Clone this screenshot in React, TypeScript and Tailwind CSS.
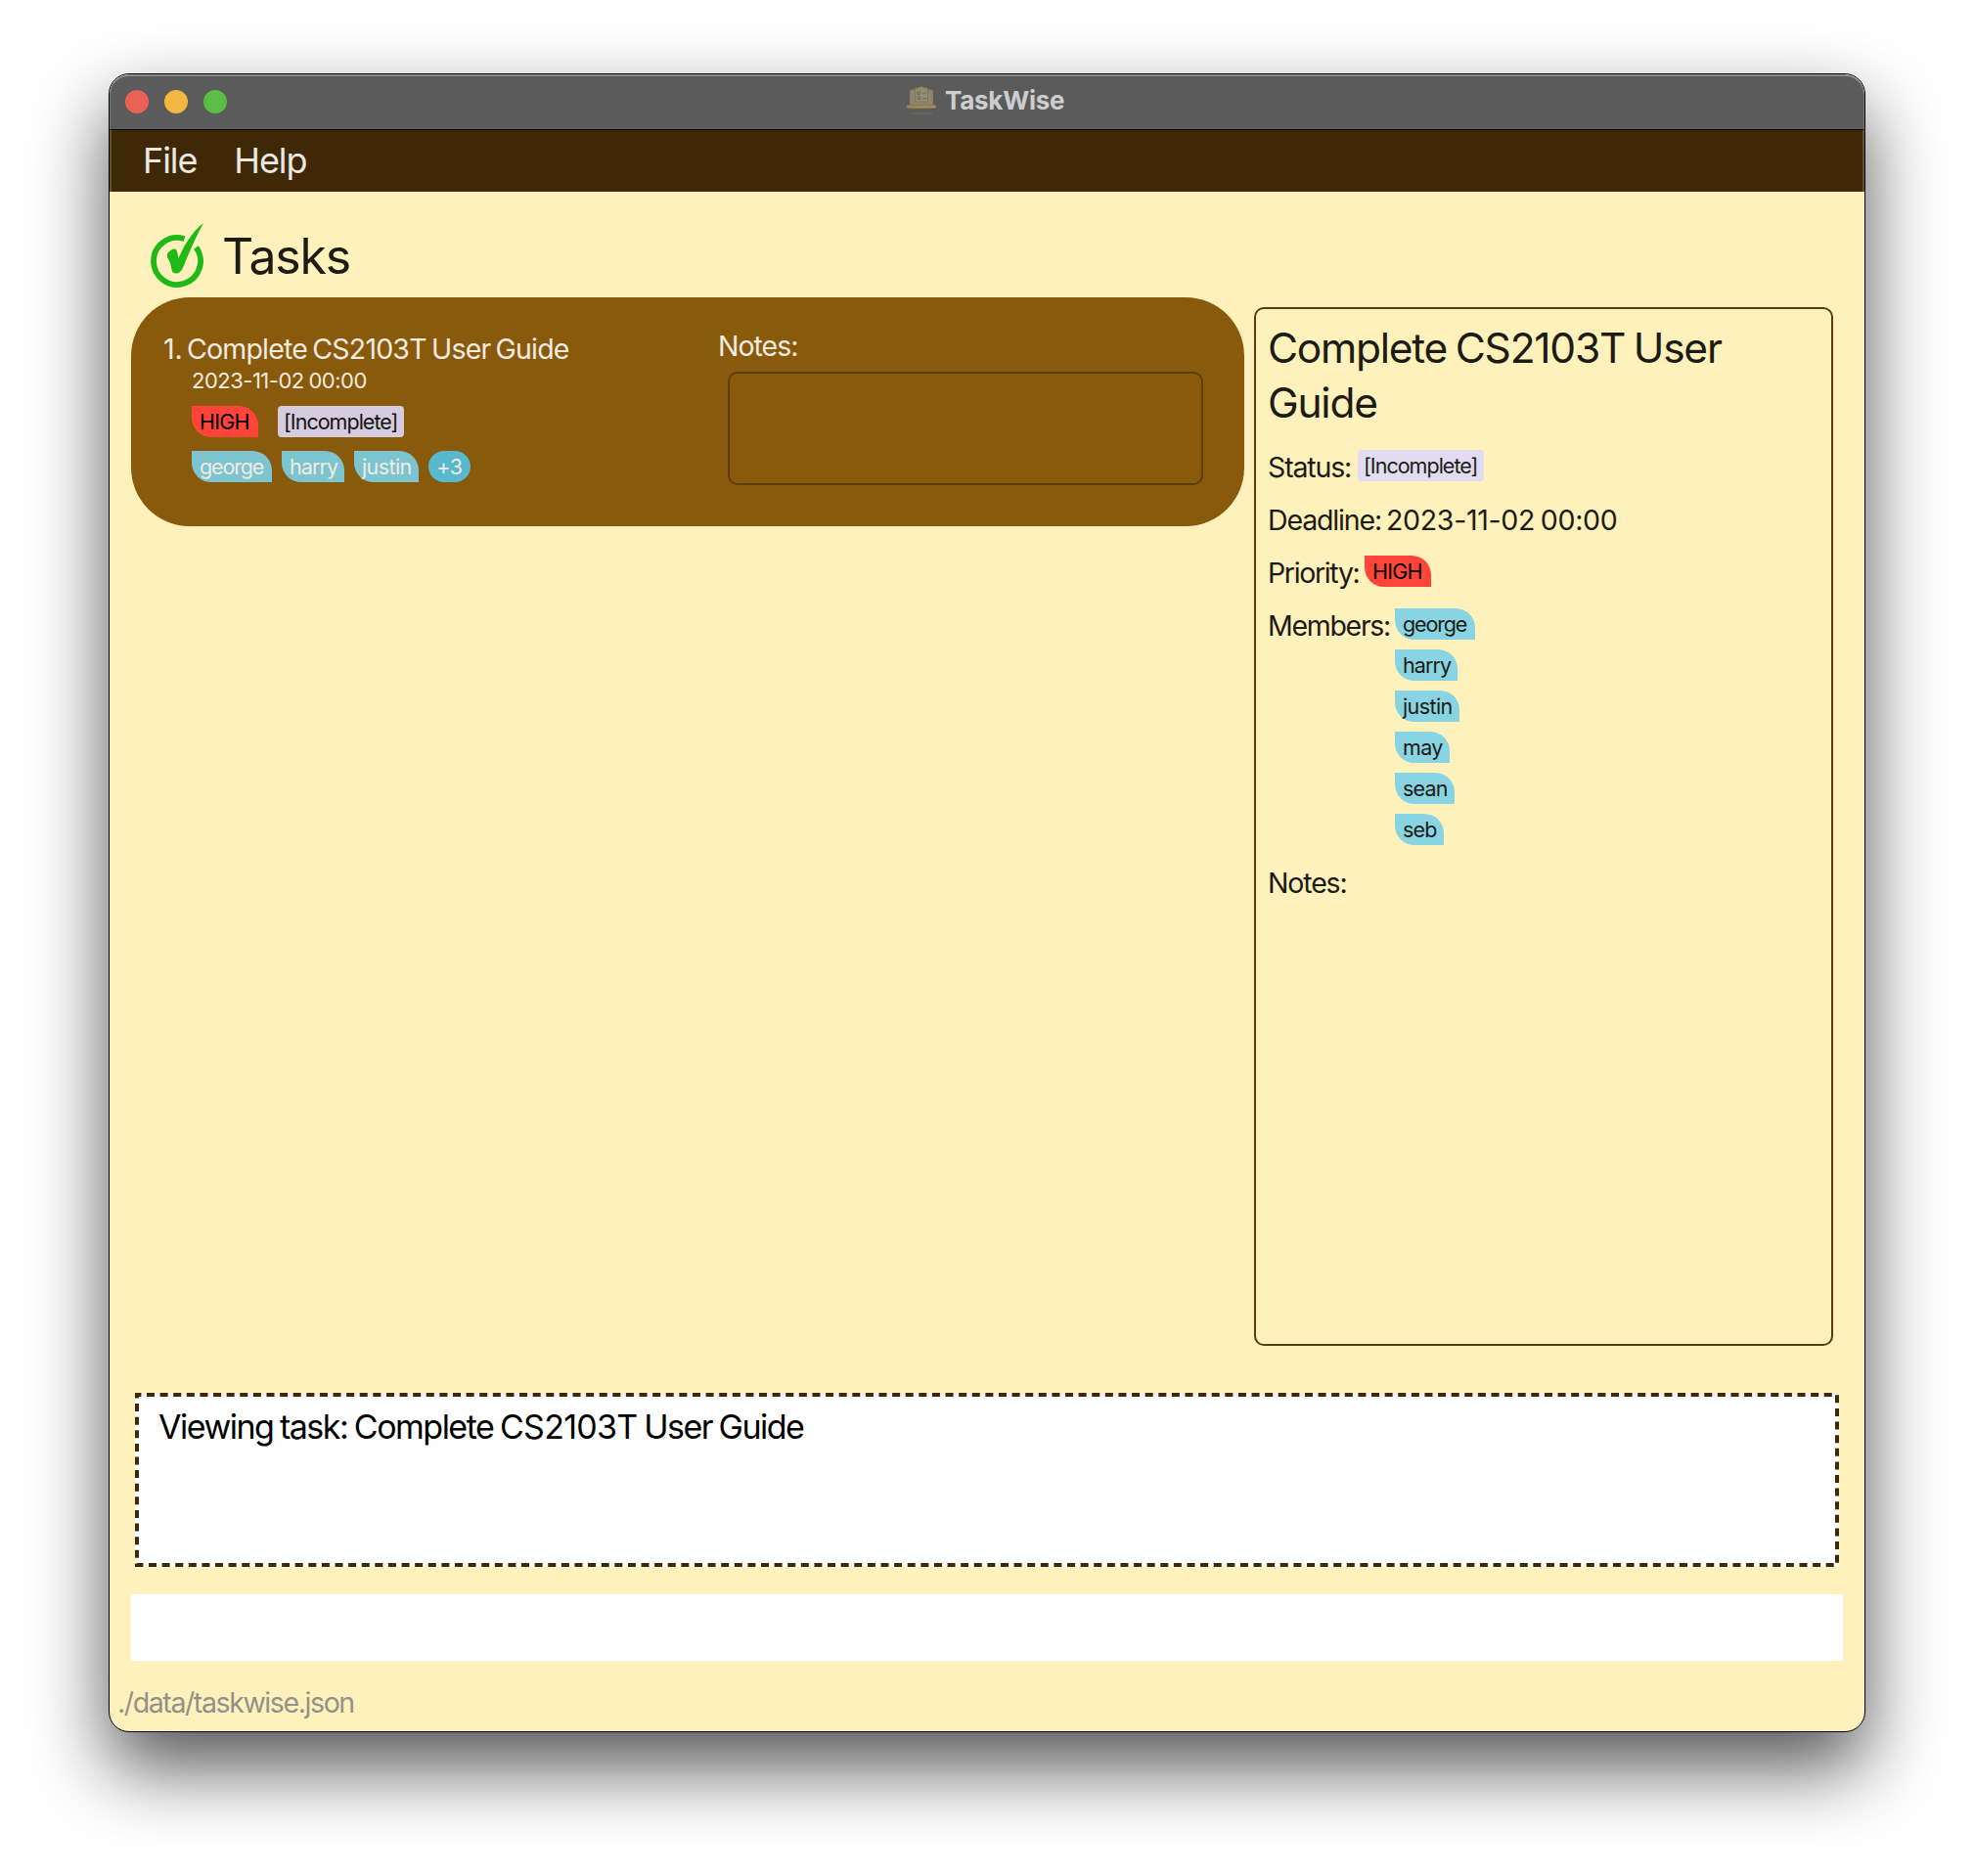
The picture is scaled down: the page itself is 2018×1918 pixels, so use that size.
import React from "react";

function AppLogo() {
  return (
    <svg className="-mt-0.5 -ml-px h-[32px] w-[32px]" viewBox="0 0 32 32" fill="none">
      <path d="M4.500 20V6.500Q4.500 5 6 5h20Q27.500 5 27.500 6.500V20z" fill="#8c8678" stroke="#8f7f52" strokeWidth="1" />
      <path d="M1 20.500h30v1.200c0 1.200-1 2-2.400 2H3.400C2 23.700 1 22.900 1 21.700z" fill="#a08b57" />
      <rect x="9.500" y="3" width="13" height="14" rx="1" fill="#8f8b7f" stroke="#8a7440" strokeWidth="1" />
      <path d="M13 3.600h6M16 1.800v2" stroke="#a08b57" strokeWidth="2" />
      <path d="M12 7h2.500v2.500H12zM12 12h2.500v2.500H12zM17.500 8.300l1 1 2-2.500M17 13.500h4" stroke="#776a42" strokeWidth="1" />
      <path d="M5 29h22" stroke="#80703f" strokeWidth="2" strokeDasharray="2 1" opacity="0.6" />
    </svg>
  );
}

function CheckLogo() {
  return (
    <svg className="h-[66px] w-[54px]" viewBox="0 0 54 66" fill="none">
      <path d="M34.500 16.200A24 24 0 1 0 46.500 25" stroke="#1fba18" strokeWidth="5.800" />
      <path d="M17 31.500C19 28.500 22 26 25 26.500C27.500 27.500 27.500 32 28.500 36C33 25 42 9 54 0C47 13 42 24 37 36C34 43 32 51 27 51.500C21 52 22 48 20 41C19 37 16 36 17 31.500z" fill="#1fba18" />
    </svg>
  );
}

const leaf = "flex h-8 items-center rounded-tr-[20px] rounded-bl-[20px] text-[21.500px] whitespace-nowrap";

function Priority() {
  return <span className={leaf + " w-[68px] bg-[#ff453a] pl-2 tracking-[-0.800px] text-black"}>HIGH</span>;
}

function Status({ tone }: { tone: string }) {
  return (
    <span className={"flex h-8 w-[129px] items-center rounded pl-[6px] text-[21.500px] tracking-[-0.980px] whitespace-nowrap " + tone}>
      [Incomplete]
    </span>
  );
}

const members = [
  { name: "george", size: "w-[82px] tracking-[-1.150px]" },
  { name: "harry", size: "w-16 tracking-[-0.900px]" },
  { name: "justin", size: "w-[66px] tracking-[-0.600px]" },
  { name: "may", size: "w-14 tracking-[-0.700px]" },
  { name: "sean", size: "w-[61px] tracking-[-0.800px]" },
  { name: "seb", size: "w-[50px] tracking-[-0.800px]" },
];

function TaskCard() {
  return (
    <article className="flex h-[234px] w-[1138px] rounded-[60px] bg-[#8a5a0c] text-[#f1ebe0]">
      <div className="w-[600px] pt-[36px] pl-[33px]">
        <h2 className="flex h-[34px] items-center text-[28.500px] whitespace-nowrap">
          <span className="w-6 shrink-0">1.</span>
          <span className="tracking-[-0.800px] [word-spacing:-2px]">Complete CS2103T User Guide</span>
        </h2>
        <div className="pl-[29px]">
          <p className="flex h-[31px] items-center text-[22px] tracking-[-0.500px] [word-spacing:-1px]">2023-11-02 00:00</p>
          <div className="mt-[10px] flex gap-5">
            <Priority />
            <Status tone="bg-[#d5cce0] text-[#141210]" />
          </div>
          <div className="mt-[14px] flex gap-[10px]">
            {members.slice(0, 3).map((m) => (
              <span key={m.name} className={leaf + " bg-[#7dc4d1] pl-2 " + m.size}>{m.name}</span>
            ))}
            <span className="flex h-8 w-[43px] items-center justify-center rounded-full bg-[#58b8ce] text-[21.500px] tracking-[-0.300px]">+3</span>
          </div>
        </div>
      </div>
      <div className="pt-[33px]">
        <p className="flex h-[34px] items-center text-[28.500px] tracking-[-1px]">Notes:</p>
        <div className="mt-[9px] ml-[10px] h-[116px] w-[486px] rounded-[10px] border-2 border-[#5c3d0b]" />
      </div>
    </article>
  );
}

const row = "flex h-8 items-start text-[28.500px] leading-[35px] tracking-[-1.150px] whitespace-nowrap";

function Details() {
  return (
    <aside className="mt-[10px] h-[1062px] w-[592px] rounded-[10px] border-2 border-[#5a3d0b] pt-[12px] pl-3 text-[#1c1b14]">
      <h2 className="w-[560px] text-[42.500px] leading-[56px] tracking-[-1.250px] [word-spacing:-2px]">Complete CS2103T User Guide</h2>
      <div className="mt-5 flex flex-col gap-[22px]">
        <div className={row}><span className="w-[92px]">Status:</span><Status tone="bg-[#e2dcf2] text-[#1c1b14]" /></div>
        <div className={row}>
          <span className="w-[121px]">Deadline:</span>
          <span className="tracking-[-0.300px] [word-spacing:-2px]">2023-11-02 00:00</span>
        </div>
        <div className={row}><span className="w-[99px] tracking-[-1.350px]">Priority:</span><Priority /></div>
        <div className="flex">
          <div className={row + " w-[130px]"}><span className="tracking-[-1.300px]">Members:</span></div>
          <div className="flex flex-col gap-[10px]">
            {members.map((m) => (
              <span key={m.name} className={leaf + " bg-[#89d4e2] pl-2 " + m.size}>{m.name}</span>
            ))}
          </div>
        </div>
        <div className={row}><span className="-mt-px">Notes:</span></div>
      </div>
    </aside>
  );
}

export default function App() {
  return (
    <div className="h-[1918px] w-[2018px] overflow-hidden bg-white pt-[75px] pl-[111px] font-['Inter',sans-serif]">
      <div className="flex h-[1696px] w-[1796px] flex-col overflow-hidden rounded-[21px] border border-black bg-[#fff1bb] shadow-[0_36px_78px_rgba(0,0,0,0.67)]">
        <header className="flex h-14 shrink-0 items-center rounded-t-[20px] border-x border-t-2 border-x-[#7a7a7a] border-t-[#8a8a8a] bg-[#5b5b5b] px-[15px] pb-[2px]">
          <div className="flex w-[799px] gap-4">
            <span className="size-6 rounded-full bg-[#ea6156]" />
            <span className="size-6 rounded-full bg-[#f2b840]" />
            <span className="size-6 rounded-full bg-[#5bbf47]" />
          </div>
          <AppLogo />
          <h1 className="ml-2 pb-[3px] text-[26px] font-bold tracking-[-0.250px] text-[#cdcdcd]">TaskWise</h1>
        </header>
        <nav className="flex h-16 shrink-0 items-center gap-[38px] border-x-2 border-t border-x-[#62502f] border-t-black bg-[#3f2806] pb-[2px] pl-8 text-[36px] tracking-[-1.100px] text-[#ebe7e1]">
          <span>File</span>
          <span>Help</span>
        </nav>
        <main className="flex flex-col pl-[22px]">
          <div className="flex h-[108px] pt-8 pl-5">
            <CheckLogo />
            <span className="ml-[19px] pt-1 text-[50px] leading-[60px] tracking-[-1.200px] text-[#1c1b14]">Tasks</span>
          </div>
          <div className="flex gap-[10px]">
            <TaskCard />
            <Details />
          </div>
          <section className="relative mt-12 ml-1 h-[178px] w-[1742px] bg-white px-[24px] pt-[13px] text-[34px] leading-[44px] tracking-[-1.500px] text-black shadow-[inset_0_8px_6px_-4px_rgba(0,0,0,0.08)] [word-spacing:-1.500px]">
            <svg className="absolute inset-0" width="1742" height="178" fill="none">
              <rect x="2" y="2" width="1738" height="174" stroke="#3f2806" strokeWidth="4" strokeDasharray="8 5.609" strokeDashoffset="3.600" />
            </svg>
            Viewing task: Complete <span className="tracking-[-0.700px]">CS2103T</span> User Guide
          </section>
          <div className="mt-7 h-[68px] w-[1750px] bg-white" />
        </main>
        <footer className="mt-[26px] pl-2 text-[28.500px] leading-[34px] tracking-[-1.400px] text-[#94918a]">./data/taskwise.json</footer>
      </div>
    </div>
  );
}
